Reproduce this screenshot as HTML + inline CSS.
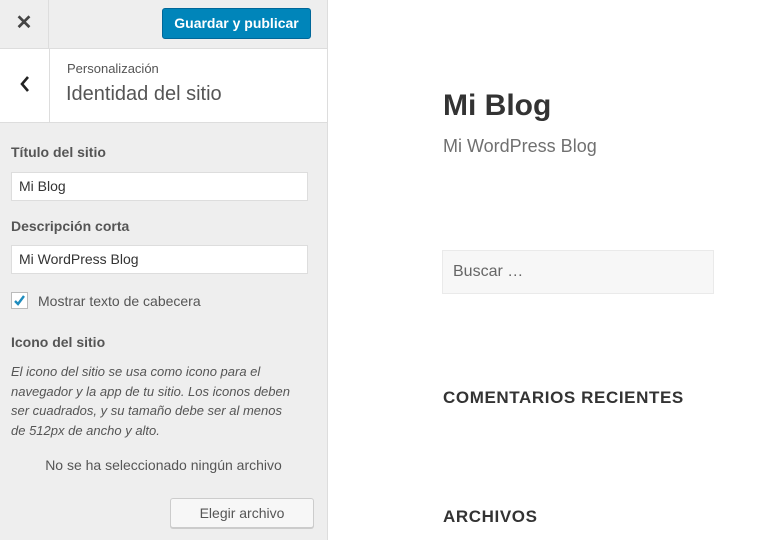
<!DOCTYPE html>
<html><head><meta charset="utf-8"><style>
*{box-sizing:border-box;margin:0;padding:0}
body{width:781px;height:540px;overflow:hidden;background:#fff;font-family:"Liberation Sans",sans-serif;position:relative;color:#333}
.sb{position:absolute;left:0;top:0;width:328px;height:540px;background:#eee;border-right:1px solid #ddd}
.abs{position:absolute}
.close{left:0;top:0;width:49px;height:48px;border-right:1px solid #ddd;font-size:20px;font-weight:bold;text-align:center;line-height:46px;color:#444}
.topb{left:0;top:48px;width:327px;height:1px;background:#ddd}
.pub{left:162px;top:8px;width:149px;height:31px;background:#0085ba;border:1px solid #006799;border-radius:3px;color:#fff;font-size:14px;font-weight:bold;text-align:center;line-height:28px}
.hdr{left:0;top:49px;width:327px;height:74px;background:#fff;border-bottom:1px solid #ddd}
.back{left:0;top:49px;width:50px;height:73px;border-right:1px solid #ddd}
.lbl{font-size:14px;font-weight:bold;color:#555}
.inp{left:11px;width:297px;height:29px;background:#fff;border:1px solid #ddd;font-size:14px;padding-left:7px;line-height:27px;color:#333}
.it{left:11px;width:302px;font-size:13px;font-style:italic;line-height:19.5px;color:#555}
.btn{left:170px;top:498px;width:144px;height:30px;background:#f7f7f7;border:1px solid #ccc;border-radius:3px;font-size:14px;text-align:center;line-height:28px;color:#555;box-shadow:0 1px 0 #ccc}
</style></head><body>
<div class="sb"></div>
<div class="abs close">✕</div>
<div class="abs topb"></div>
<div class="abs pub">Guardar y publicar</div>
<div class="abs hdr"></div>
<div class="abs back"><svg width="50" height="73"><path d="M28 77 L22 84 L28 91" transform="translate(0,-49)" fill="none" stroke="#222" stroke-width="2.6"/></svg></div>
<div class="abs" style="left:67px;top:61px;font-size:13px;color:#555">Personalización</div>
<div class="abs" style="left:66px;top:83px;font-size:20px;color:#555">Identidad del sitio</div>
<div class="abs lbl" style="left:11px;top:144px">Título del sitio</div>
<div class="abs inp" style="top:172px">Mi Blog</div>
<div class="abs lbl" style="left:11px;top:218px">Descripción corta</div>
<div class="abs inp" style="top:245px">Mi WordPress Blog</div>
<div class="abs" style="left:11px;top:292px;width:17px;height:17px;background:#fff;border:1px solid #bbb"><svg width="15" height="15"><path d="M3 8 L6 11 L12 3" fill="none" stroke="#1e8cbe" stroke-width="2.4"/></svg></div>
<div class="abs" style="left:38px;top:293px;font-size:14px;color:#555">Mostrar texto de cabecera</div>
<div class="abs lbl" style="left:11px;top:334px">Icono del sitio</div>
<div class="abs it" style="top:362px">El icono del sitio se usa como icono para el<br>navegador y la app de tu sitio. Los iconos deben<br>ser cuadrados, y su tamaño debe ser al menos<br>de 512px de ancho y alto.</div>
<div class="abs" style="left:0;width:327px;top:457px;text-align:center;font-size:14px;color:#555">No se ha seleccionado ningún archivo</div>
<div class="abs btn">Elegir archivo</div>

<div class="abs" style="left:443px;top:89px;font-size:30px;font-weight:bold;color:#333">Mi Blog</div>
<div class="abs" style="left:443px;top:136px;font-size:18px;color:#707070">Mi WordPress Blog</div>
<div class="abs" style="left:442px;top:250px;width:272px;height:44px;background:#f7f7f7;border:1px solid #eaeaea;font-size:16px;color:#666;padding-left:10px;line-height:42px">Buscar …</div>
<div class="abs" style="left:443px;top:388px;font-size:17px;font-weight:bold;letter-spacing:0.6px;color:#333">COMENTARIOS RECIENTES</div>
<div class="abs" style="left:443px;top:507px;font-size:17px;font-weight:bold;letter-spacing:0.6px;color:#333">ARCHIVOS</div>
</body></html>
